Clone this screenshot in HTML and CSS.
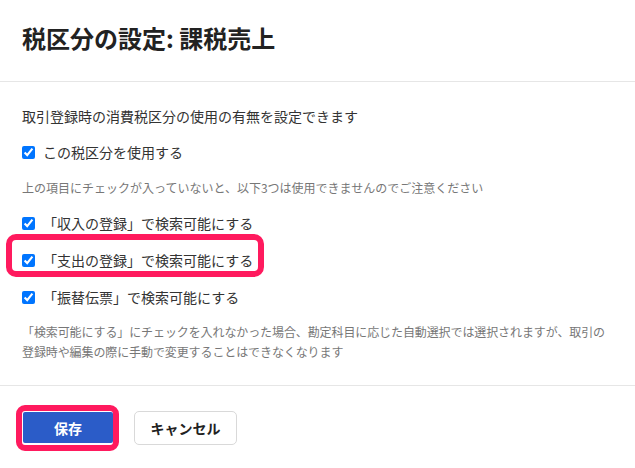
FILE: index.html
```html
<!DOCTYPE html>
<html lang="ja">
<head>
<meta charset="utf-8">
<link rel="stylesheet" href="styles.css">
</head>
<body>
<div class="dialog">
  <header class="head">
    <h1 class="title">税区分の設定: 課税売上</h1>
  </header>
  <section class="body">
    <p class="intro">取引登録時の消費税区分の使用の有無を設定できます</p>
    <label class="row row-first"><input type="checkbox" checked><span>この税区分を使用する</span></label>
    <p class="note">上の項目にチェックが入っていないと、以下3つは使用できませんのでご注意ください</p>
    <label class="row row-a"><input type="checkbox" checked><span>「収入の登録」で検索可能にする</span></label>
    <label class="row row-b highlight"><input type="checkbox" checked><span>「支出の登録」で検索可能にする</span></label>
    <label class="row row-b"><input type="checkbox" checked><span>「振替伝票」で検索可能にする</span></label>
    <p class="para"><span class="line">「検索可能にする」にチェックを入れなかった場合、勘定科目に応じた自動選択では選択されますが、取引の</span><span class="line">登録時や編集の際に手動で変更することはできなくなります</span></p>
  </section>
  <footer class="foot">
    <span class="save-wrap"><button class="btn btn-save">保存</button></span>
    <button class="btn btn-cancel">キャンセル</button>
  </footer>
</div>
</body>
</html>
```

FILE: styles.css
```css
html, body {
  margin: 0;
  padding: 0;
  background: #fff;
}
body {
  font-family: "Noto Sans CJK JP", "Noto Sans", sans-serif;
  color: #333;
  width: 635px;
  height: 468px;
  overflow: hidden;
}
.head {
  padding: 22px 22px 0;
  height: 59px;
  border-bottom: 1px solid #e6e6e6;
}
.title {
  margin: 0;
  font-size: 24px;
  line-height: 32px;
  font-weight: 700;
  color: #222;
}
.body {
  padding: 24px 22px 23px;
  border-bottom: 1px solid #e6e6e6;
}
.intro {
  margin: 0;
  font-size: 14px;
  line-height: 20px;
}
.row {
  display: flex;
  align-items: center;
  gap: 8px;
  font-size: 14px;
  line-height: 20px;
  height: 20px;
  color: #333;
}
.row input {
  margin: 0;
  width: 13px;
  height: 13px;
  accent-color: #0075ff;
  flex: none;
}
.row-first { margin-top: 16px; }
.row-a { margin-top: 15px; }
.row-b { margin-top: 17px; }
.note {
  margin: 16px 0 0;
  font-size: 12px;
  line-height: 20px;
  color: #777;
}
.para {
  margin: 15px -22px 0 0;
  font-size: 12px;
  line-height: 20px;
  color: #777;
}
.para .line {
  display: block;
  white-space: nowrap;
  letter-spacing: -0.1px;
}
.highlight {
  position: relative;
}
.highlight::before {
  content: "";
  position: absolute;
  left: -16px;
  top: -16px;
  width: 246px;
  height: 31px;
  border: 6px solid #ff1a5e;
  border-radius: 10px;
  pointer-events: none;
}
.foot {
  display: flex;
  align-items: center;
  gap: 15px;
  padding: 19px 16px;
}
.save-wrap {
  display: flex;
  border: 6px solid #ff1a5e;
  border-radius: 9px;
  padding: 1px 0 2px 1px;
  background: #fff;
}
.btn {
  font-family: "Noto Sans CJK JP", "Noto Sans", sans-serif;
  font-size: 14px;
  font-weight: 700;
  border-radius: 4px;
  cursor: pointer;
  padding: 0;
}
.btn-save {
  width: 90px;
  height: 31px;
  background: #2b5cc8;
  color: #fff;
  border: none;
  border-radius: 2px;
}
.btn-cancel {
  width: 103px;
  height: 34px;
  background: #fff;
  color: #222;
  border: 1px solid #d9d9d9;
  border-radius: 5px;
}
```
